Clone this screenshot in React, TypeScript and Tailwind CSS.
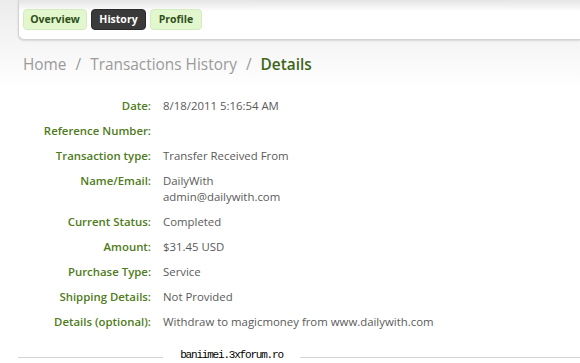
import React from "react";

const rows: { label: string; value: string[] }[] = [
  { label: "Date:", value: ["8/18/2011 5:16:54 AM"] },
  { label: "Reference Number:", value: [""] },
  { label: "Transaction type:", value: ["Transfer Received From"] },
  { label: "Name/Email:", value: ["DailyWith", "admin@dailywith.com"] },
  { label: "Current Status:", value: ["Completed"] },
  { label: "Amount:", value: ["$31.45 USD"] },
  { label: "Purchase Type:", value: ["Service"] },
  { label: "Shipping Details:", value: ["Not Provided"] },
  { label: "Details (optional):", value: ["Withdraw to magicmoney from www.dailywith.com"] },
];

export default function App() {
  return (
    <div className="relative w-[580px] h-[363px] overflow-hidden bg-white" style={{ fontFamily: "'Open Sans', 'DejaVu Sans', sans-serif" }}>
      <div className="h-[90px] bg-gradient-to-b from-[#ececec] to-white absolute inset-x-0 top-0" />
      <div className="relative">
        <div className="ml-[18px] h-[40px] rounded-bl-[6px] bg-gradient-to-b from-[#e4e4e4] via-white via-30% to-white border-b border-l border-[#d2d2d2] shadow-[0_1px_2px_rgba(0,0,0,0.12)] flex items-start gap-[4px] pl-[4px] pt-[9px]">
          <div className="h-[21px] w-[64px] flex items-center justify-center rounded-[4px] bg-[#e3f7cf] border border-[#d3ecbc] text-[10.5px] font-bold text-[#2f4f1a]">Overview</div>
          <div className="h-[21px] w-[55px] flex items-center justify-center rounded-[4px] bg-[#3a3a3a] border border-[#2a2a2a] text-[10.5px] font-bold text-white">History</div>
          <div className="h-[21px] w-[52px] flex items-center justify-center rounded-[4px] bg-[#e3f7cf] border border-[#d3ecbc] text-[10.5px] font-bold text-[#2f4f1a]">Profile</div>
        </div>
        <div className="pl-[23px] pt-[14px] text-[15.4px] leading-[22px] text-[#9a9a9a] flex gap-[9px]">
          <span>Home</span>
          <span>/</span>
          <span>Transactions History</span>
          <span>/</span>
          <span className="font-semibold text-[#3d6619]">Details</span>
        </div>
        <div className="pt-[22px] flex flex-col gap-[9px]">
          {rows.map((r) => (
            <div key={r.label} className="flex text-[11.4px] leading-[16px]">
              <div className="w-[151px] text-right font-semibold text-[#4f7b20]">{r.label}</div>
              <div className="pl-[12px] text-[#5a5a5a] min-h-[16px]">
                {r.value.map((v, i) => (
                  <div key={i}>{v}</div>
                ))}
              </div>
            </div>
          ))}
        </div>
      </div>
      <div className="absolute left-[18px] right-0 top-[357px] h-px bg-[#d4d4d4]" />
      <div className="absolute left-[163px] top-[348px] w-[137px] h-[15px] bg-white flex items-center justify-center text-[11px] tracking-[-1.2px] text-black" style={{ fontFamily: "'Liberation Mono', monospace" }}>
        baniimei.3xforum.ro
      </div>
    </div>
  );
}
